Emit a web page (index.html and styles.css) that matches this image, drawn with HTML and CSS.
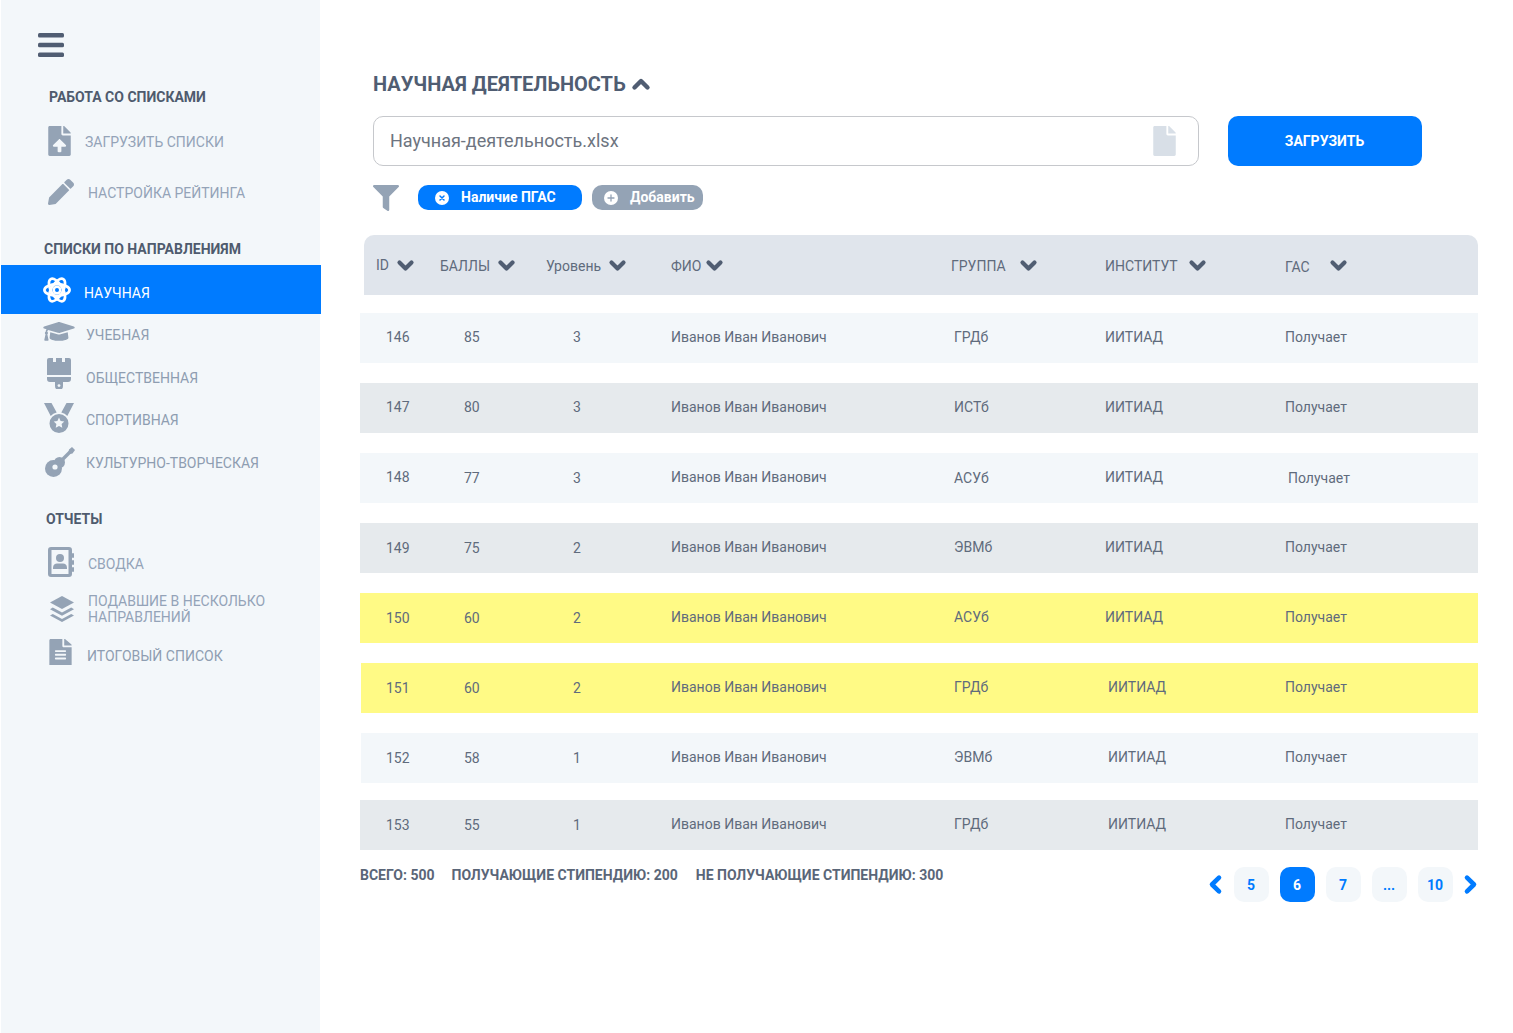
FILE: index.html
```html
<!DOCTYPE html>
<html lang="ru">
<head>
    <meta charset="UTF-8">
    <title>Научная деятельность</title>
    <link rel="stylesheet" href="styles.css">
</head>
<body>
<aside class="sidebar">
    <svg class="burger" viewBox="0 0 26 24"><rect y="0" width="26" height="4.6" rx="1.5"/><rect y="9.7" width="26" height="4.6" rx="1.5"/><rect y="19.4" width="26" height="4.6" rx="1.5"/></svg>

    <h3 class="side-title side-title--first">РАБОТА СО СПИСКАМИ</h3>
    <a class="nav-item nav-item--upload">
        <svg class="icon ic-upload" viewBox="0 0 384 512"><path d="M224 136V0H24C10.7 0 0 10.7 0 24v464c0 13.3 10.7 24 24 24h336c13.3 0 24-10.7 24-24V160H248c-13.2 0-24-10.8-24-24zm65.18 216.01H224v80c0 8.84-7.16 16-16 16h-32c-8.84 0-16-7.16-16-16v-80H94.82c-14.28 0-21.41-17.29-11.27-27.36l96.42-95.7c6.65-6.61 17.39-6.61 24.04 0l96.42 95.7c10.15 10.07 3.03 27.36-11.25 27.36zM377 105L279.1 7c-4.5-4.5-10.6-7-17-7H256v128h128v-6.1c0-6.3-2.5-12.4-7-16.9z"/></svg>
        <span>ЗАГРУЗИТЬ СПИСКИ</span>
    </a>
    <a class="nav-item nav-item--rating">
        <svg class="icon ic-pencil" viewBox="0 0 512 512"><path d="M497.9 142.1l-46.1 46.1c-4.7 4.7-12.3 4.7-17 0l-111-111c-4.7-4.7-4.7-12.3 0-17l46.1-46.1c18.7-18.7 49.1-18.7 67.9 0l60.1 60.1c18.8 18.7 18.8 49.1 0 67.9zM284.2 99.8L21.6 362.4.4 483.9c-2.9 16.4 11.4 30.6 27.8 27.8l121.5-21.3 262.6-262.6c4.7-4.7 4.7-12.3 0-17l-111-111c-4.8-4.7-12.4-4.7-17.1 0z"/></svg>
        <span>НАСТРОЙКА РЕЙТИНГА</span>
    </a>

    <h3 class="side-title side-title--second">СПИСКИ ПО НАПРАВЛЕНИЯМ</h3>
    <a class="nav-item nav-item--active">
        <svg class="icon ic-atom" viewBox="0 0 28 30"><g fill="none" stroke="#fff" stroke-width="2.7"><ellipse cx="14" cy="15" rx="12.6" ry="5.8"/><ellipse cx="14" cy="15" rx="12.6" ry="5.8" transform="rotate(60 14 15)"/><ellipse cx="14" cy="15" rx="12.6" ry="5.8" transform="rotate(120 14 15)"/></g><circle cx="14" cy="15" r="4.6" fill="#fff"/><circle cx="14" cy="15" r="2" fill="#007bff"/></svg>
        <span>НАУЧНАЯ</span>
    </a>
    <a class="nav-item nav-item--dir">
        <svg class="icon ic-cap" viewBox="0 0 640 448"><path d="M622.34 89.2L343.4 3.5c-15.2-4.67-31.6-4.67-46.79 0L17.66 89.2c-23.54 7.23-23.54 38.36 0 45.59l48.63 14.94c-10.67 13.19-17.23 29.28-17.88 46.9C38.78 202.15 32 212.11 32 224c0 10.78 5.68 19.85 13.86 25.65L20.33 364.53C18.11 374.52 25.71 384 35.94 384h56.11c10.24 0 17.84-9.48 15.62-19.47L82.14 249.65C90.32 243.85 96 234.78 96 224c0-11.57-6.47-21.25-15.66-26.87.76-15.02 8.44-28.3 20.69-36.72L296.6 220.5c9.06 2.78 26.44 6.25 46.79 0l278.95-85.7c23.55-7.24 23.55-38.36 0-45.6zM352.79 251.09c-28.53 8.76-52.84 3.92-65.59 0l-145.02-44.55L128 320c0 35.35 85.96 64 192 64s192-28.65 192-64l-14.18-113.47-145.03 44.56z"/></svg>
        <span>УЧЕБНАЯ</span>
    </a>
    <a class="nav-item nav-item--dir">
        <svg class="icon ic-brush" viewBox="0 0 24 31"><path d="M2 0h4v4h3V0h6v4h3V0h4a2 2 0 0 1 2 2v15H0V2a2 2 0 0 1 2-2zM0 19h24v2a3 3 0 0 1-3 3h-5v4a4 4 0 0 1-8 0v-4H3a3 3 0 0 1-3-3z"/><circle cx="12" cy="27.6" r="1.4" fill="#f3f7fa"/></svg>
        <span>ОБЩЕСТВЕННАЯ</span>
    </a>
    <a class="nav-item nav-item--dir">
        <svg class="icon ic-medal" viewBox="0 0 30 30"><path d="M0 0h7.5l5.2 9.5a10 10 0 0 0-6 3.6zM30 0h-7.5l-5.2 9.5a10 10 0 0 1 6 3.6z"/><path fill-rule="evenodd" d="M15 11a9.5 9.5 0 1 1 0 19 9.5 9.5 0 0 1 0-19zm0 3.6l-1.6 3.4-3.7.5 2.7 2.6-.7 3.7 3.3-1.8 3.3 1.8-.7-3.7 2.7-2.6-3.7-.5z"/></svg>
        <span>СПОРТИВНАЯ</span>
    </a>
    <a class="nav-item nav-item--dir">
        <svg class="icon ic-guitar" viewBox="0 0 30 30"><circle cx="8.500" cy="21.500" r="8.500"/><circle cx="14.500" cy="15.500" r="5.500"/><path d="M14 16L26 4" stroke="#94a3b5" stroke-width="3.400"/><path d="M24 2.500L27 0l3 3-2.500 3.500-2.500.5-1.500-1.500z"/><circle cx="10" cy="20" r="2.600" fill="#f3f7fa"/></svg>
        <span>КУЛЬТУРНО-ТВОРЧЕСКАЯ</span>
    </a>

    <h3 class="side-title side-title--third">ОТЧЕТЫ</h3>
    <a class="nav-item nav-item--summary">
        <svg class="icon ic-book" viewBox="0 0 26 30"><path fill-rule="evenodd" d="M3 0h18a3 3 0 0 1 3 3v24a3 3 0 0 1-3 3H3a3 3 0 0 1-3-3V3a3 3 0 0 1 3-3zm.500 3v24h17V3z"/><rect x="24" y="6" width="2" height="5" rx="1"/><rect x="24" y="13" width="2" height="5" rx="1"/><rect x="24" y="20" width="2" height="5" rx="1"/><circle cx="12" cy="11" r="4"/><path d="M5 20.500c0-2.500 2-4 4-4h6c2 0 4 1.500 4 4V22H5z"/></svg>
        <span>СВОДКА</span>
    </a>
    <a class="nav-item nav-item--multi">
        <svg class="icon ic-layers" viewBox="0 0 24 26"><path d="M12 0l12 6.500-12 6.500L0 6.500z"/><path d="M2.800 11.600L12 16.600l9.200-5L24 13.200 12 19.700 0 13.200z"/><path d="M2.800 18l9.200 5 9.200-5 2.800 1.500L12 26 0 19.500z"/></svg>
        <span>ПОДАВШИЕ В НЕСКОЛЬКО НАПРАВЛЕНИЙ</span>
    </a>
    <a class="nav-item nav-item--final">
        <svg class="icon ic-filealt" viewBox="0 0 384 448"><path d="M224 120V0H24C10.700 0 0 10.700 0 24v424h384V144H248c-13.200 0-24-10.800-24-24zm64 220c0 6.600-5.400 12-12 12H108c-6.600 0-12-5.400-12-12v-8c0-6.600 5.400-12 12-12h168c6.600 0 12 5.400 12 12v8zm0-64c0 6.600-5.400 12-12 12H108c-6.600 0-12-5.400-12-12v-8c0-6.600 5.400-12 12-12h168c6.600 0 12 5.400 12 12v8zm0-72v8c0 6.600-5.400 12-12 12H108c-6.600 0-12-5.400-12-12v-8c0-6.600 5.400-12 12-12h168c6.600 0 12 5.400 12 12zm96-98.100v6.100H256V0h6.100c6.400 0 12.500 2.500 17 7l97.900 82c4.500 4.500 7 10.600 7 16.900z"/></svg>
        <span>ИТОГОВЫЙ СПИСОК</span>
    </a>
</aside>

<main class="content">
    <h1 class="page-title">НАУЧНАЯ ДЕЯТЕЛЬНОСТЬ
        <svg class="chevron chevron--title" viewBox="0 0 18 12"><path d="M2.500 9.500L9 3l6.500 6.500"/></svg>
    </h1>

    <div class="upload-row">
        <div class="file-input">
            <span>Научная-деятельность.xlsx</span>
            <svg class="file-icon" viewBox="0 0 384 512"><path d="M224 136V0H24C10.700 0 0 10.700 0 24v464c0 13.300 10.700 24 24 24h336c13.300 0 24-10.700 24-24V160H248c-13.200 0-24-10.800-24-24zm160-14.100v6.100H256V0h6.100c6.400 0 12.500 2.500 17 7l97.900 98c4.500 4.500 7 10.600 7 16.900z"/></svg>
        </div>
        <button class="btn-upload">ЗАГРУЗИТЬ</button>
    </div>

    <div class="filters">
        <svg class="filter-icon" viewBox="0 0 512 512"><path d="M487.976 0H24.028C2.710 0-8.047 25.866 7.058 40.971L192 225.941V432c0 7.831 3.821 15.171 10.237 19.662l80 55.980C298.020 518.690 320 507.493 320 487.980V225.941l184.947-184.970C520.021 25.896 509.338 0 487.976 0z"/></svg>
        <span class="chip chip--active">
            <svg class="chip-icon" viewBox="0 0 14 14"><circle cx="7" cy="7" r="7" fill="#fff"/><path d="M5 5l4 4M9 5l-4 4" stroke="#007bff" stroke-width="1.500" stroke-linecap="round"/></svg>
            <span>Наличие ПГАС</span>
        </span>
        <span class="chip chip--add">
            <svg class="chip-icon" viewBox="0 0 14 14"><circle cx="7" cy="7" r="7" fill="#fff"/><path d="M7 4v6M4 7h6" stroke="#94a3b5" stroke-width="1.300" stroke-linecap="round"/></svg>
            <span>Добавить</span>
        </span>
    </div>

    <div class="thead">
        <div class="th gap-8"><span class="th-id">ID</span> <svg class="chevron" viewBox="0 0 17 11"><use href="#chev"/></svg></div>
        <div class="th gap-8"><span>БАЛЛЫ</span> <svg class="chevron" viewBox="0 0 17 11"><use href="#chev"/></svg></div>
        <div class="th gap-8"><span>Уровень</span> <svg class="chevron" viewBox="0 0 17 11"><use href="#chev"/></svg></div>
        <div class="th gap-5"><span>ФИО</span> <svg class="chevron" viewBox="0 0 17 11"><use href="#chev"/></svg></div>
        <div class="th gap-14"><span>ГРУППА</span> <svg class="chevron" viewBox="0 0 17 11"><use href="#chev"/></svg></div>
        <div class="th gap-11"><span>ИНСТИТУТ</span> <svg class="chevron" viewBox="0 0 17 11"><use href="#chev"/></svg></div>
        <div class="th gap-20"><span class="th-low">ГАС</span> <svg class="chevron" viewBox="0 0 17 11"><use href="#chev"/></svg></div>
    </div>

    <div class="row row--light"><div class="c-id">146</div><div class="c-score">85</div><div class="c-level">3</div><div>Иванов Иван Иванович</div><div class="c-group">ГРДб</div><div>ИИТИАД</div><div>Получает</div></div>
    <div class="row row--dark"><div class="c-id">147</div><div class="c-score">80</div><div class="c-level">3</div><div>Иванов Иван Иванович</div><div class="c-group">ИСТб</div><div>ИИТИАД</div><div>Получает</div></div>
    <div class="row row--light"><div class="c-id">148</div><div class="c-score c-low">77</div><div class="c-level c-low">3</div><div>Иванов Иван Иванович</div><div class="c-group c-low">АСУб</div><div>ИИТИАД</div><div class="c-shift c-low">Получает</div></div>
    <div class="row row--dark row--low"><div class="c-id">149</div><div class="c-score">75</div><div class="c-level">2</div><div>Иванов Иван Иванович</div><div class="c-group">ЭВМб</div><div>ИИТИАД</div><div>Получает</div></div>
    <div class="row row--yellow row--low"><div class="c-id">150</div><div class="c-score">60</div><div class="c-level">2</div><div>Иванов Иван Иванович</div><div class="c-group">АСУб</div><div>ИИТИАД</div><div>Получает</div></div>
    <div class="row row--yellow row--low row--inset"><div class="c-id">151</div><div class="c-score">60</div><div class="c-level">2</div><div>Иванов Иван Иванович</div><div class="c-group">ГРДб</div><div class="c-shift">ИИТИАД</div><div>Получает</div></div>
    <div class="row row--light row--low row--inset row--tight"><div class="c-id">152</div><div class="c-score">58</div><div class="c-level">1</div><div>Иванов Иван Иванович</div><div class="c-group">ЭВМб</div><div class="c-shift">ИИТИАД</div><div>Получает</div></div>
    <div class="row row--dark row--low row--last"><div class="c-id">153</div><div class="c-score">55</div><div class="c-level">1</div><div>Иванов Иван Иванович</div><div class="c-group">ГРДб</div><div class="c-shift">ИИТИАД</div><div>Получает</div></div>

    <div class="table-footer">
        <div class="totals">
            <span>ВСЕГО: 500</span>
            <span>ПОЛУЧАЮЩИЕ СТИПЕНДИЮ: 200</span>
            <span class="totals-last">НЕ ПОЛУЧАЮЩИЕ СТИПЕНДИЮ: 300</span>
        </div>
        <div class="pager">
            <svg class="pager-arrow pager-arrow--prev" viewBox="0 0 14 19"><path d="M11 2.700L4 9.500l7 6.800"/></svg>
            <a class="page">5</a>
            <a class="page page--current">6</a>
            <a class="page">7</a>
            <a class="page">...</a>
            <a class="page">10</a>
            <svg class="pager-arrow" viewBox="0 0 14 19"><path d="M3 2.700l7 6.800-7 6.800"/></svg>
        </div>
    </div>
</main>

<svg class="defs" width="0" height="0"><defs><path id="chev" d="M2.500 2.500l6 6 6-6"/></defs></svg>
</body>
</html>
```

FILE: styles.css
```css
body {
    margin: 0;
    min-height: 1033px;
    display: flex;
    background-color: #fff;
    color: #5a6678;
    font-family: Roboto, "Liberation Sans", sans-serif;
    font-size: 14px;
}

.defs {
    position: absolute;
}

/* sidebar */
.sidebar {
    width: 319px;
    margin-left: 1px;
    flex-shrink: 0;
    padding-top: 33px;
    background-color: #f3f7fa;
    box-sizing: border-box;
}

.burger {
    display: block;
    width: 26px;
    height: 24px;
    margin-left: 37px;
    fill: #505d72;
}

.side-title {
    margin: 0;
    color: #4f5b6e;
    font-size: 14px;
    font-weight: 700;
    line-height: 16px;
}

.side-title--first {
    margin-top: 32px;
    padding-left: 48px;
}

.side-title--second {
    margin-top: 22px;
    margin-bottom: 8px;
    padding-left: 43px;
}

.side-title--third {
    margin-top: 27px;
    margin-bottom: 13px;
    padding-left: 45px;
}

.nav-item {
    display: grid;
    grid-template-columns: 85px 1fr;
    align-items: center;
    color: #94a3b8;
    font-size: 14px;
    line-height: 16px;
}

.icon {
    display: block;
    fill: #94a3b5;
}

.nav-item--upload {
    height: 50px;
    margin-top: 12px;
    grid-template-columns: 84px 1fr;
}

.nav-item--rating {
    height: 52px;
    grid-template-columns: 87px 1fr;
}

.nav-item--active {
    height: 49px;
    margin-right: -1px;
    grid-template-columns: 83px 1fr;
    background-color: #007bff;
    color: #fff;
}

.nav-item--active span {
    padding-top: 7px;
}

.nav-item--dir {
    height: 42.6px;
    color: #8e9db1;
}

.nav-item--summary {
    height: 48px;
    grid-template-columns: 87px 1fr;
}

.nav-item--multi {
    height: 42px;
    grid-template-columns: 87px 1fr;
}

.nav-item--final {
    height: 52px;
    grid-template-columns: 86px 1fr;
    color: #8e9db1;
}

.ic-upload { width: 23px; height: 30px; margin-left: 47px; margin-bottom: 2px; }
.ic-pencil { width: 26px; height: 26px; margin-left: 47px; margin-bottom: 3px; }
.ic-atom { width: 28px; height: 30px; margin-left: 42px; }
.ic-cap { width: 32px; height: 22px; margin-left: 42px; margin-bottom: 4px; }
.ic-brush { width: 24px; height: 31px; margin-left: 46px; margin-bottom: 8px; }
.ic-medal { width: 30px; height: 30px; margin-left: 43px; margin-bottom: 4px; }
.ic-guitar { width: 30px; height: 30px; margin-left: 44px; margin-bottom: 3px; }
.ic-book { width: 26px; height: 30px; margin-left: 47px; margin-bottom: 4px; }
.ic-layers { width: 24px; height: 26px; margin-left: 49px; }
.ic-filealt { width: 23px; height: 26px; margin-left: 48px; margin-bottom: 8px; }

/* main */
.content {
    width: 1118px;
    margin-left: 40px;
}

.page-title {
    display: flex;
    align-items: center;
    gap: 6px;
    margin: 72px 0 0 13px;
    color: #505d72;
    font-size: 20px;
    font-weight: 700;
    line-height: 24px;
}

.chevron {
    width: 17px;
    height: 11px;
    flex-shrink: 0;
    overflow: visible;
    fill: none;
    stroke: #505d72;
    stroke-width: 4.2;
    stroke-linejoin: round;
    stroke-linecap: round;
}

.chevron--title {
    width: 18px;
    height: 12px;
    stroke-width: 4.4;
}

.upload-row {
    display: flex;
    gap: 29px;
    margin: 20px 0 0 13px;
}

.file-input {
    display: flex;
    align-items: center;
    justify-content: space-between;
    width: 826px;
    height: 50px;
    padding: 0 22px 0 16px;
    box-sizing: border-box;
    border: 1px solid #c6c8cc;
    border-radius: 10px;
    color: #6d7480;
    font-size: 18px;
}

.file-input span {
    padding-bottom: 1px;
}

.file-icon {
    width: 23px;
    height: 30px;
    fill: #d8dfe7;
}

.btn-upload {
    width: 194px;
    height: 50px;
    padding: 0 7px 0 6px;
    border: 0;
    border-radius: 10px;
    background-color: #007bff;
    color: #fff;
    font-family: inherit;
    font-size: 14px;
    font-weight: 700;
}

.filters {
    display: flex;
    align-items: center;
    margin: 19px 0 0 13px;
    height: 25px;
}

.filter-icon {
    width: 26px;
    height: 26px;
    fill: #94a3b5;
    margin-right: 19px;
}

.chip {
    display: flex;
    align-items: center;
    height: 25px;
    border-radius: 10px;
    color: #fff;
    font-weight: 700;
    box-sizing: border-box;
}

.chip span {
    padding-bottom: 2px;
}

.chip--active {
    width: 164px;
    margin-right: 10px;
    padding-left: 17px;
    gap: 12px;
    background-color: #007bff;
}

.chip--add {
    width: 111px;
    padding-left: 12px;
    gap: 12px;
    background-color: #94a3b5;
}

.chip-icon {
    width: 14px;
    height: 14px;
}

/* table */
.thead, .row {
    display: grid;
    grid-template-columns: 64px 106px 125px 280px 154px 180px 1fr;
    align-items: center;
}

.thead {
    height: 60px;
    margin: 25px 0 0 4px;
    padding-left: 12px;
    border-radius: 10px 10px 0 0;
    background-color: #e0e5ec;
    color: #5f6b7c;
}

.th {
    display: flex;
    align-items: center;
}

.th span {
    padding-top: 2px;
}

.th .th-id {
    padding-top: 0;
}

.th .th-low {
    padding-top: 4px;
}

.gap-5 { gap: 5px; }
.gap-8 { gap: 8px; }
.gap-11 { gap: 11px; }
.gap-14 { gap: 14px; }
.gap-20 { gap: 20px; }

.row {
    height: 50px;
    margin-bottom: 20px;
    padding-left: 16px;
    padding-bottom: 2px;
    box-sizing: border-box;
    color: #5f6b7c;
}

.thead + .row {
    margin-top: 18px;
}

.row--light { background-color: #f3f7fa; }
.row--dark { background-color: #e6eaed; }
.row--yellow { background-color: #fffa85; }

.row--inset {
    margin-left: 1px;
    padding-left: 15px;
}

.row--tight {
    margin-bottom: 17px;
}

.row--last {
    margin-bottom: 0;
}

.c-id { padding-left: 10px; }
.c-score { padding-left: 24px; }
.c-level { padding-left: 27px; }
.c-group { padding-left: 3px; }
.c-shift { padding-left: 3px; }

.c-low,
.row--low .c-id,
.row--low .c-score,
.row--low .c-level {
    padding-top: 2px;
}

/* footer */
.table-footer {
    display: flex;
    justify-content: space-between;
    margin-top: 17px;
}

.totals {
    display: flex;
    gap: 17px;
    color: #5a6678;
    font-weight: 700;
    line-height: 16px;
}

.totals-last {
    margin-left: 1px;
}

.pager {
    display: flex;
    align-items: center;
    gap: 11px;
}

.pager-arrow {
    width: 14px;
    height: 19px;
    fill: none;
    stroke: #007bff;
    stroke-width: 4.6;
    stroke-linejoin: round;
    stroke-linecap: round;
    overflow: visible;
}

.pager-arrow--prev {
    margin-right: 1px;
}

.page {
    display: flex;
    align-items: center;
    justify-content: center;
    width: 35px;
    height: 35px;
    padding-right: 1px;
    box-sizing: border-box;
    border-radius: 10px;
    background-color: #f3f7fa;
    color: #007bff;
    font-weight: 700;
}

.page--current {
    background-color: #007bff;
    color: #fff;
}
```
